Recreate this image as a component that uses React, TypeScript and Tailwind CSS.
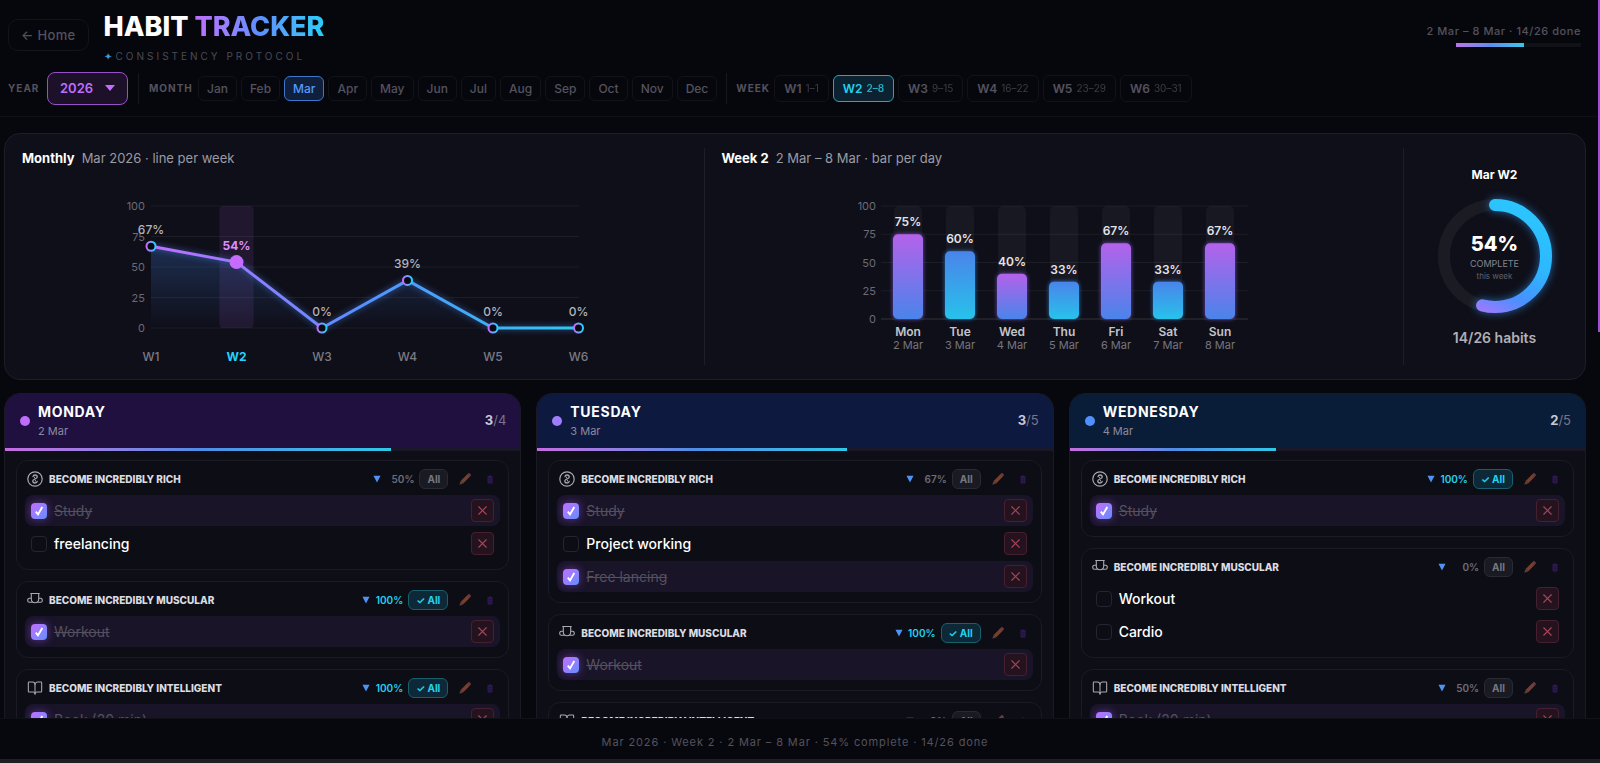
import { useState } from "react";
import { BookOpen, X } from "lucide-react";

type Habit = { name: string; done: boolean };
type GroupIcon = "coin" | "trophy" | "book";
type Group = { icon: GroupIcon; title: string; habits: Habit[] };
type Day = { name: string; date: string; header: string; dot: string; groups: Group[] };

const MONTHS = ["Jan", "Feb", "Mar", "Apr", "May", "Jun", "Jul", "Aug", "Sep", "Oct", "Nov", "Dec"];

const WEEKS = [
  { label: "W1", range: "1–1", value: 67 },
  { label: "W2", range: "2–8", value: 54 },
  { label: "W3", range: "9–15", value: 0 },
  { label: "W4", range: "16–22", value: 39 },
  { label: "W5", range: "23–29", value: 0 },
  { label: "W6", range: "30–31", value: 0 },
];

const BARS = [
  { day: "Mon", date: "2 Mar", value: 75 },
  { day: "Tue", date: "3 Mar", value: 60 },
  { day: "Wed", date: "4 Mar", value: 40 },
  { day: "Thu", date: "5 Mar", value: 33 },
  { day: "Fri", date: "6 Mar", value: 67 },
  { day: "Sat", date: "7 Mar", value: 33 },
  { day: "Sun", date: "8 Mar", value: 67 },
];

const TICKS = [100, 75, 50, 25, 0];

const DAYS: Day[] = [
  {
    name: "Monday",
    date: "2 Mar",
    header: "bg-[#1f1040]",
    dot: "bg-[#c06cff]",
    groups: [
      {
        icon: "coin",
        title: "Become incredibly rich",
        habits: [
          { name: "Study", done: true },
          { name: "freelancing", done: false },
        ],
      },
      { icon: "trophy", title: "Become incredibly muscular", habits: [{ name: "Workout", done: true }] },
      { icon: "book", title: "Become incredibly intelligent", habits: [{ name: "Book (20 min)", done: true }] },
    ],
  },
  {
    name: "Tuesday",
    date: "3 Mar",
    header: "bg-[#0e193f]",
    dot: "bg-[#a07dff]",
    groups: [
      {
        icon: "coin",
        title: "Become incredibly rich",
        habits: [
          { name: "Study", done: true },
          { name: "Project working", done: false },
          { name: "Free lancing", done: true },
        ],
      },
      { icon: "trophy", title: "Become incredibly muscular", habits: [{ name: "Workout", done: true }] },
      { icon: "book", title: "Become incredibly intelligent", habits: [{ name: "Book (20 min)", done: false }] },
    ],
  },
  {
    name: "Wednesday",
    date: "4 Mar",
    header: "bg-[#0a1d38]",
    dot: "bg-[#4f8fff]",
    groups: [
      { icon: "coin", title: "Become incredibly rich", habits: [{ name: "Study", done: true }] },
      {
        icon: "trophy",
        title: "Become incredibly muscular",
        habits: [
          { name: "Workout", done: false },
          { name: "Cardio", done: false },
        ],
      },
      {
        icon: "book",
        title: "Become incredibly intelligent",
        habits: [
          { name: "Book (20 min)", done: true },
          { name: "Course", done: false },
        ],
      },
    ],
  },
];

function CoinIcon() {
  return (
    <svg viewBox="0 0 16 16" className="size-4 shrink-0" fill="none" stroke="currentColor" strokeLinecap="round">
      <circle cx="8" cy="8" r="7.2" strokeWidth="1.2" />
      <path
        d="M6 5.600C6.200 4.500 7 4 8 4s2.200.6 2.200 1.900S9 7.500 8 8s-2.200.8-2.200 2.100S7 12 8 12s2-.5 2.200-1.600"
        strokeWidth="1.300"
      />
      <path d="M7.600 6.200v.6M8.400 9.400v.6" strokeWidth="1" />
    </svg>
  );
}

function TrophyIcon() {
  return (
    <svg viewBox="0 0 16 16" className="size-4 shrink-0" fill="none" stroke="currentColor" strokeWidth="1.100">
      <path d="M3.300 1.500h9.400M4.300 1.500v5.500c0 2 1.200 3.700 3.700 3.700s3.700-1.700 3.700-3.700V1.500" />
      <path d="M4.300 6.300H2.400C1.300 6.300.7 7.300.7 8.400s.7 1.900 1.700 1.900h3.200M11.700 6.300h1.900c1.100 0 1.700 1 1.700 2.100s-.7 1.900-1.700 1.900h-3.200" />
    </svg>
  );
}

function PencilIcon() {
  return (
    <svg viewBox="0 0 14 14" className="size-[14px]">
      <path d="M2.600 8.900 9.500 2l2.500 2.500-6.900 6.900z" fill="#74402f" />
      <path d="M9.500 2 11 .8 13.200 3 12 4.500z" fill="#6e3a4a" />
      <path d="M2.600 8.900 1.300 12.700 5.100 11.400z" fill="#5d4238" />
    </svg>
  );
}

function TrashIcon() {
  return (
    <svg viewBox="0 0 10 12" className="h-[11px] w-2" fill="none" stroke="#301a54">
      <path d="M1.500 2.500h7M3.500 1.500h3" strokeWidth="1.300" />
      <path d="M2.500 3.500h5v7h-5z" fill="#23143f" strokeWidth="1.200" />
      <path d="M2.500 6h5M2.500 8.300h5" strokeWidth="0.800" />
    </svg>
  );
}

const GROUP_ICONS: Record<GroupIcon, React.ReactNode> = {
  coin: <CoinIcon />,
  trophy: <TrophyIcon />,
  book: <BookOpen className="size-4 shrink-0" strokeWidth={1.6} />,
};

function LineChart() {
  const x = (i: number) => 37 + i * 85.5;
  const y = (v: number) => 151 - v * 1.22;
  const points = WEEKS.map((w, i) => `${x(i)},${y(w.value)}`).join(" ");

  return (
    <svg viewBox="0 0 480 188" className="mx-auto mt-[9px] h-[188px] w-[480px] max-w-full">
      <defs>
        <linearGradient id="line" gradientUnits="userSpaceOnUse" x1="37" y1="0" x2="465" y2="0">
          <stop offset="0" stopColor="#c56cff" />
          <stop offset="0.5" stopColor="#5590ff" />
          <stop offset="1" stopColor="#2cc9ee" />
        </linearGradient>
        <linearGradient id="point" x1="0" y1="0" x2="1" y2="0">
          <stop offset="0" stopColor="#c56cff" />
          <stop offset="1" stopColor="#22d3ff" />
        </linearGradient>
        <linearGradient id="area" x1="0" y1="0" x2="0" y2="1">
          <stop offset="0" stopColor="#4a90ff" stopOpacity="0.24" />
          <stop offset="1" stopColor="#4a90ff" stopOpacity="0" />
        </linearGradient>
      </defs>
      {TICKS.map((t) => (
        <g key={t}>
          <line x1="37" x2="465" y1={y(t)} y2={y(t)} className="stroke-white/[0.06]" />
          <text x="31" y={y(t) + 4} textAnchor="end" className="fill-[#6b6b76] text-[11px]">
            {t}
          </text>
        </g>
      ))}
      <rect x={x(1) - 17} y={y(100)} width="34" height="122" rx="4" className="fill-[#c56cff]/10" />
      <polygon points={`${x(0)},${y(0)} ${points}`} fill="url(#area)" />
      <polyline
        points={points}
        fill="none"
        stroke="url(#line)"
        strokeWidth="3"
        strokeLinejoin="round"
        className="drop-shadow-[0_0_3px_rgba(74,144,255,0.6)]"
      />
      {WEEKS.map((w, i) => {
        const active = w.label === "W2";
        return (
          <g key={w.label} textAnchor="middle">
            {active ? (
              <circle cx={x(i)} cy={y(w.value)} r="7" fill="#c56cff" />
            ) : (
              <circle cx={x(i)} cy={y(w.value)} r="4.500" fill="#0a0a12" stroke="url(#point)" strokeWidth="2" />
            )}
            <text
              x={x(i)}
              y={y(w.value) - 12}
              className={active ? "fill-[#dc90ff] text-[12px] font-bold" : "fill-[#b4b4bb] text-[12px] font-medium"}
            >
              {w.value}%
            </text>
            <text
              x={x(i)}
              y="184"
              className={active ? "fill-[#22d3ff] text-[12px] font-bold" : "fill-[#7b7b85] text-[12px] font-medium"}
            >
              {w.label}
            </text>
          </g>
        );
      })}
    </svg>
  );
}

function BarChart() {
  const y = (v: number) => 142 - v * 1.13;

  return (
    <svg viewBox="0 0 400 188" className="mx-auto mt-[9px] h-[188px] w-[400px] max-w-full">
      <defs>
        <linearGradient id="barPurple" x1="0" y1="0" x2="0" y2="1">
          <stop offset="0" stopColor="#b462ea" />
          <stop offset="1" stopColor="#4a84ea" />
        </linearGradient>
        <linearGradient id="barBlue" x1="0" y1="0" x2="0" y2="1">
          <stop offset="0" stopColor="#4a84ea" />
          <stop offset="1" stopColor="#27c2ea" />
        </linearGradient>
      </defs>
      {TICKS.map((t) => (
        <g key={t}>
          <line
            x1="27"
            x2="394"
            y1={y(t)}
            y2={y(t)}
            className={t === 0 ? "stroke-white/[0.14]" : "stroke-white/[0.06]"}
          />
          <text x="22" y={y(t) + 4} textAnchor="end" className="fill-[#6b6b76] text-[11px]">
            {t}
          </text>
        </g>
      ))}
      {BARS.map((b, i) => {
        const cx = 54 + i * 52;
        const purple = i % 2 === 0;
        return (
          <g key={b.day} textAnchor="middle">
            <rect x={cx - 14} y={y(100)} width="28" height="113" rx="5" className="fill-white/[0.04]" />
            <rect
              x={cx - 15}
              y={y(b.value)}
              width="30"
              height={142 - y(b.value)}
              rx="5"
              fill={purple ? "url(#barPurple)" : "url(#barBlue)"}
              className={
                purple
                  ? "drop-shadow-[0_0_2px_rgba(150,100,255,0.7)]"
                  : "drop-shadow-[0_0_2px_rgba(50,160,255,0.7)]"
              }
            />
            <text x={cx} y={y(b.value) - 8} className="fill-[#e4e4e8] text-[12px] font-semibold">
              {b.value}%
            </text>
            <text x={cx} y="159" className="fill-[#c4c4ca] text-[12px] font-semibold">
              {b.day}
            </text>
            <text x={cx} y="172" className="fill-[#75757f] text-[11px]">
              {b.date}
            </text>
          </g>
        );
      })}
    </svg>
  );
}

function Ring({ percent }: { percent: number }) {
  const r = 51;
  const length = 2 * Math.PI * r;

  return (
    <div className="grid size-[126px] place-items-center">
      <svg viewBox="0 0 126 126" className="col-start-1 row-start-1 size-full overflow-visible">
        <defs>
          <linearGradient id="ring" gradientUnits="userSpaceOnUse" x1="90" y1="20" x2="45" y2="118">
            <stop offset="0" stopColor="#2cc4ff" />
            <stop offset="0.400" stopColor="#2cb8ff" />
            <stop offset="0.750" stopColor="#4a90ff" />
            <stop offset="1" stopColor="#a478ff" />
          </linearGradient>
        </defs>
        <circle cx="63" cy="63" r={r} fill="none" stroke="#1b1b24" strokeWidth="12" />
        {/* starts at twelve o'clock and runs clockwise */}
        <path
          d="M63 12a51 51 0 0 1 0 102a51 51 0 0 1 0-102"
          fill="none"
          stroke="url(#ring)"
          strokeWidth="12"
          strokeLinecap="round"
          strokeDasharray={`${(length * percent) / 100} ${length}`}
          className="drop-shadow-[0_0_4px_rgba(50,160,255,0.6)]"
        />
      </svg>
      <div className="col-start-1 row-start-1 flex flex-col items-center">
        <span className="text-xl leading-7 font-extrabold text-white">{percent}%</span>
        <span className="text-[9px] leading-3 text-[#85858f]">COMPLETE</span>
        <span className="text-[8px] leading-3 text-[#60606a]">this week</span>
      </div>
    </div>
  );
}

function HabitRow({ habit, onToggle, onRemove }: { habit: Habit; onToggle: () => void; onRemove: () => void }) {
  return (
    <li className={`flex h-[31px] items-center rounded-lg px-[6px] ${habit.done ? "bg-[#1a1429]" : ""}`}>
      <label className="flex flex-1 cursor-pointer items-center gap-[7px]">
        <span className="grid place-items-center">
          <input
            type="checkbox"
            checked={habit.done}
            onChange={onToggle}
            className="peer col-start-1 row-start-1 size-4 appearance-none rounded-sm border border-[#262433] checked:border-0 checked:bg-linear-to-br checked:from-[#bf6cff] checked:to-[#5b8dff] checked:shadow-[0_0_8px_rgba(160,90,255,0.5)]"
          />
          <svg
            viewBox="0 0 16 16"
            className="pointer-events-none invisible col-start-1 row-start-1 size-4 peer-checked:visible"
          >
            <path d="M4.800 8.600 7 11.400 11.300 4" fill="none" stroke="#fff" strokeWidth="1.900" />
          </svg>
        </span>
        <span className={habit.done ? "text-sm text-[#54505f] line-through" : "text-sm font-medium text-white"}>
          {habit.name}
        </span>
      </label>
      <button
        type="button"
        onClick={onRemove}
        aria-label={`Delete ${habit.name}`}
        className="grid size-[23px] place-items-center rounded-sm border border-[#47202f] bg-[#24121e] text-[#a84558]"
      >
        <X className="size-[15px]" strokeWidth={1.8} />
      </button>
    </li>
  );
}

function GroupCard({ group, onChange }: { group: Group; onChange: (habits: Habit[]) => void }) {
  const [open, setOpen] = useState(true);
  const { habits } = group;
  const done = habits.filter((h) => h.done).length;
  const percent = habits.length ? Math.round((done / habits.length) * 100) : 0;
  const all = percent === 100;

  return (
    <section className="rounded-xl border border-[#1b1b26] bg-[#0d0d16] px-2 pt-2 pb-[10px]">
      <div className="mb-[6px] flex h-5 items-center px-[2px]">
        <span className="text-[#a9a9b0]">{GROUP_ICONS[group.icon]}</span>
        <h3 className="ml-[6px] flex-1 text-[10px] font-extrabold text-[#dcdce0] uppercase">{group.title}</h3>
        <button type="button" onClick={() => setOpen((v) => !v)} aria-label="Collapse" className="mr-[5px]">
          <svg viewBox="0 0 8 8" className={open ? "size-2" : "size-2 -rotate-90"}>
            <path d="M0.500 0.800h7L4 7.500z" fill="#4f94f5" />
          </svg>
        </button>
        <span
          className={`mr-[5px] w-7 text-right text-[10px] font-semibold ${all ? "text-[#22d3ee]" : "text-[#6e6e78]"}`}
        >
          {percent}%
        </span>
        <button
          type="button"
          onClick={() => onChange(habits.map((h) => ({ ...h, done: !all })))}
          className={`flex h-5 items-center rounded-md border px-[7px] text-[10px] font-bold ${
            all ? "border-[#17606e] bg-[#0d2837] text-[#22d3ee]" : "border-[#2a2a34] bg-[#1a1a23] text-[#77777f]"
          }`}
        >
          {all ? "✓ All" : "All"}
        </button>
        <button type="button" aria-label="Edit group" className="ml-[10px]">
          <PencilIcon />
        </button>
        <button type="button" aria-label="Delete group" className="mr-1 ml-[14px]">
          <TrashIcon />
        </button>
      </div>
      {open ? (
        <ul className="flex flex-col gap-[2px]">
          {habits.map((h, i) => (
            <HabitRow
              key={h.name}
              habit={h}
              onToggle={() => onChange(habits.map((o, j) => (i === j ? { ...o, done: !o.done } : o)))}
              onRemove={() => onChange(habits.filter((_, j) => i !== j))}
            />
          ))}
        </ul>
      ) : null}
    </section>
  );
}

function DayCard({ day }: { day: Day }) {
  const [groups, setGroups] = useState(day.groups);
  const habits = groups.flatMap((g) => g.habits);
  const done = habits.filter((h) => h.done).length;

  return (
    <article className="overflow-hidden rounded-t-2xl border border-[#1a1a25] bg-[#0e0e17]">
      <header className={`flex h-[54px] items-center gap-2 pr-[14px] pl-[15px] ${day.header}`}>
        <span className={`size-[10px] rounded-full ${day.dot}`} />
        <div className="flex-1">
          <h2 className="text-sm leading-5 font-bold tracking-wider text-white uppercase">{day.name}</h2>
          <p className="text-[11px] leading-[18px] text-[#8d8a9c]">{day.date}</p>
        </div>
        <p className="text-[13px] text-[#77758c]">
          <span className="font-bold text-[#c9c8d6]">{done}</span>/{habits.length}
        </p>
      </header>
      <div className="h-[3px] bg-[#1a1728]">
        <div
          className="h-full bg-linear-to-r from-[#c56cdf] via-[#4f8ce6] to-[#2fc8e6]"
          style={{ width: `${(done / Math.max(habits.length, 1)) * 100}%` }}
        />
      </div>
      <div className="flex flex-col gap-[11px] px-[11px] pt-[9px] pb-4">
        {groups.map((g, i) => (
          <GroupCard
            key={g.title}
            group={g}
            onChange={(next) => setGroups(groups.map((o, j) => (i === j ? { ...o, habits: next } : o)))}
          />
        ))}
      </div>
    </article>
  );
}

export default function App() {
  const [year, setYear] = useState("2026");
  const [month, setMonth] = useState("Mar");
  const [week, setWeek] = useState("W2");

  return (
    <div className="relative flex h-screen flex-col bg-[#07080d] font-['Inter','Open_Sans',sans-serif] text-white">
      <header className="border-b border-[#0f1014] bg-[#06070c] py-[11px]">
        <div className="flex items-start px-2">
          <a
            href="#home"
            className="mt-2 mr-[15px] rounded-[10px] border border-[#13141a] px-3 py-[5px] text-[13px] leading-5 font-medium tracking-wide text-[#54525e]"
          >
            ← Home
          </a>
          <div className="flex-1">
            <h1 className="text-[27px] leading-8 font-extrabold">
              HABIT{" "}
              <span className="bg-linear-to-r from-[#c06cff] via-[#5b8fff] to-[#27cdf8] bg-clip-text text-transparent">
                TRACKER
              </span>
            </h1>
            <p className="mt-[3px] flex gap-1 text-[10px] leading-5 tracking-[3px] text-[#4c4a57]">
              <span className="tracking-normal text-[#3f95ea]">✦</span>
              CONSISTENCY PROTOCOL
            </p>
          </div>
          <div className="mt-3 mr-[11px] flex flex-col items-end gap-1">
            <p className="text-[11px] leading-4 font-medium tracking-wider text-[#54525e]">
              2 Mar – 8 Mar · 14/26 done
            </p>
            <div className="h-1 w-[125px] bg-[#111217]">
              <div className="h-full w-[54%] bg-linear-to-r from-[#b873e6] via-[#5b8df0] to-[#35c8ea]" />
            </div>
          </div>
        </div>
        <nav className="mt-[6px] flex items-center px-2">
          <label htmlFor="year" className="w-[39px] text-[10px] font-bold tracking-widest text-[#54525e]">
            YEAR
          </label>
          <div className="relative">
            <select
              id="year"
              value={year}
              onChange={(e) => setYear(e.target.value)}
              className="h-[33px] w-[81px] appearance-none rounded-lg border border-[#9a4fc8] bg-[#1c1129] pl-3 text-[13px] font-semibold text-[#bf6cff]"
            >
              <option>2025</option>
              <option>2026</option>
              <option>2027</option>
            </select>
            <svg viewBox="0 0 10 6" className="pointer-events-none absolute top-[13px] right-[13px] h-[6px] w-[10px]">
              <path d="M0 0h10L5 6z" fill="#c56cff" />
            </svg>
          </div>
          <span className="mx-[10px] h-[31px] w-px bg-[#17181d]" />
          <span className="w-[49px] text-[10px] font-bold tracking-widest text-[#54525e]">MONTH</span>
          <div className="flex gap-1">
            {MONTHS.map((m) => (
              <button
                key={m}
                type="button"
                aria-pressed={m === month}
                onClick={() => setMonth(m)}
                className={`h-[25px] rounded-md border px-2 text-xs font-medium ${
                  m === month ? "border-[#3d78cc] bg-[#10203c] text-[#549bff]" : "border-[#121319] text-[#54525e]"
                }`}
              >
                {m}
              </button>
            ))}
          </div>
          <span className="mx-[9px] h-[31px] w-px bg-[#17181d]" />
          <span className="w-[38px] text-[10px] font-bold tracking-widest text-[#54525e]">WEEK</span>
          <div className="flex gap-1">
            {WEEKS.map((w) => (
              <button
                key={w.label}
                type="button"
                aria-pressed={w.label === week}
                onClick={() => setWeek(w.label)}
                className={`flex h-[27px] items-center gap-1 rounded-md border px-[9px] text-xs font-semibold ${
                  w.label === week ? "border-[#29a5b8] bg-[#0c2230] text-[#22d3ee]" : "border-[#121319] text-[#54525e]"
                }`}
              >
                {w.label}
                <span className={`text-[10px] ${w.label === week ? "font-semibold opacity-80" : "font-normal opacity-70"}`}>
                  {w.range}
                </span>
              </button>
            ))}
          </div>
        </nav>
      </header>

      <main className="flex min-h-0 flex-1 flex-col gap-[13px] overflow-y-auto pt-4 pr-[14px] pl-1 [scrollbar-width:none]">
        <section className="flex shrink-0 rounded-2xl border border-[#1e1e29] bg-[#0f0f19] py-[14px]">
          <div className="min-w-0 flex-1 px-[17px]">
            <h2 className="text-[13px] leading-5 font-bold">
              Monthly <span className="ml-1 font-normal text-[#9b9ba3]">Mar 2026 · line per week</span>
            </h2>
            <LineChart />
          </div>
          <div className="min-w-0 flex-1 border-l border-[#1e1e29] px-[17px]">
            <h2 className="text-[13px] leading-5 font-bold">
              Week 2 <span className="ml-1 font-normal text-[#9b9ba3]">2 Mar – 8 Mar · bar per day</span>
            </h2>
            <BarChart />
          </div>
          <div className="flex w-[182px] flex-col items-center border-l border-[#1e1e29] pt-[18px]">
            <h2 className="text-xs leading-[18px] font-bold">Mar W2</h2>
            <div className="my-[9px]">
              <Ring percent={54} />
            </div>
            <p className="text-sm leading-5 font-semibold text-[#b0b0b7]">14/26 habits</p>
          </div>
        </section>

        <div className="grid shrink-0 grid-cols-3 items-start gap-[15px]">
          {DAYS.map((d) => (
            <DayCard key={d.name} day={d} />
          ))}
        </div>
      </main>

      <footer className="flex h-[45px] shrink-0 items-center justify-center border-t border-b-4 border-t-[#101117] border-b-[#1f1f21] bg-[#07080d] pt-[6px] pr-[10px] text-[11px] tracking-[0.08em] text-[#54525e]">
        <p className="leading-8">Mar 2026 · Week 2 · 2 Mar – 8 Mar · 54% complete · 14/26 done</p>
      </footer>

      <div className="absolute top-0 right-0 h-[332px] w-[2px] bg-[#a04fd6]" />
    </div>
  );
}
